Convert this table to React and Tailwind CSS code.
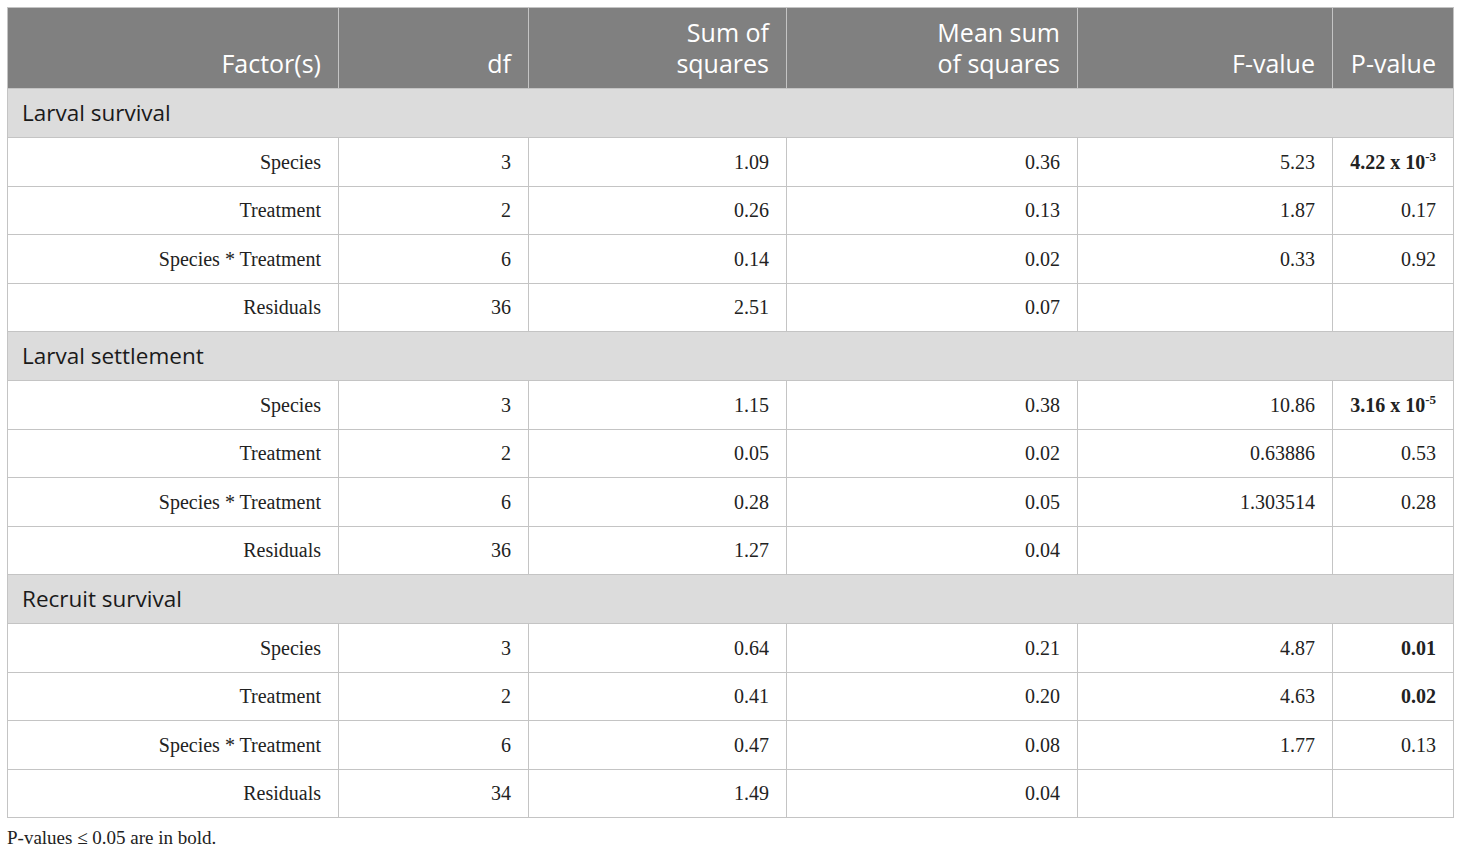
const sections = [
  {
    title: "Larval survival",
    rows: [
      ["Species", "3", "1.09", "0.36", "5.23", { base: "4.22 x 10", exp: "-3" }],
      ["Treatment", "2", "0.26", "0.13", "1.87", "0.17"],
      ["Species * Treatment", "6", "0.14", "0.02", "0.33", "0.92"],
      ["Residuals", "36", "2.51", "0.07", "", ""],
    ],
  },
  {
    title: "Larval settlement",
    rows: [
      ["Species", "3", "1.15", "0.38", "10.86", { base: "3.16 x 10", exp: "-5" }],
      ["Treatment", "2", "0.05", "0.02", "0.63886", "0.53"],
      ["Species * Treatment", "6", "0.28", "0.05", "1.303514", "0.28"],
      ["Residuals", "36", "1.27", "0.04", "", ""],
    ],
  },
  {
    title: "Recruit survival",
    rows: [
      ["Species", "3", "0.64", "0.21", "4.87", { bold: "0.01" }],
      ["Treatment", "2", "0.41", "0.20", "4.63", { bold: "0.02" }],
      ["Species * Treatment", "6", "0.47", "0.08", "1.77", "0.13"],
      ["Residuals", "34", "1.49", "0.04", "", ""],
    ],
  },
];

function PValue({ value }) {
  if (typeof value === "string") return value;
  if (value.bold) return <span className="font-bold">{value.bold}</span>;
  return (
    <span className="font-bold">
      {value.base}
      <sup className="text-[13px] -top-[8px]">{value.exp}</sup>
    </span>
  );
}

export default function App() {
  const head = "border border-[#c4c4c4] px-[17px] pb-[9px] align-bottom text-right font-normal";
  const cell = "border border-[#c4c4c4] px-[17px] text-right";

  return (
    <div className="bg-white min-h-screen pt-[7px] pl-[7px]">
      <table className="border-collapse w-[1447px] table-fixed">
        <colgroup>
          <col className="w-[331px]" />
          <col className="w-[190px]" />
          <col className="w-[258px]" />
          <col className="w-[291px]" />
          <col className="w-[255px]" />
          <col className="w-[121px]" />
        </colgroup>
        <thead>
          <tr className="h-[81px] bg-[#808080] text-white text-[25px] leading-[31px] font-['Open_Sans',sans-serif]">
            <th className={head}>Factor(s)</th>
            <th className={head}>df</th>
            <th className={head}>
              Sum of
              <br />
              squares
            </th>
            <th className={head}>
              Mean sum
              <br />
              of squares
            </th>
            <th className={head}>F-value</th>
            <th className={head}>P-value</th>
          </tr>
        </thead>
        <tbody>
          {sections.map((section) => (
            <>
              <tr key={section.title} className="h-[49px] bg-[#dcdcdc]">
                <td
                  colSpan={6}
                  className="border border-[#c4c4c4] px-[14px] text-[22.5px] text-[#1a1a1a] font-['Open_Sans',sans-serif]"
                >
                  {section.title}
                </td>
              </tr>
              {section.rows.map((row, i) => (
                <tr
                  key={section.title + i}
                  className="h-[48.5px] text-[20px] text-[#222] font-['Liberation_Serif',serif]"
                >
                  {row.slice(0, 5).map((c, j) => (
                    <td key={j} className={cell}>
                      {c}
                    </td>
                  ))}
                  <td className={cell}>
                    <PValue value={row[5]} />
                  </td>
                </tr>
              ))}
            </>
          ))}
        </tbody>
      </table>
      <p className="mt-[6px] text-[19px] text-[#222] font-['Liberation_Serif',serif]">
        P-values ≤ 0.05 are in bold.
      </p>
    </div>
  );
}
